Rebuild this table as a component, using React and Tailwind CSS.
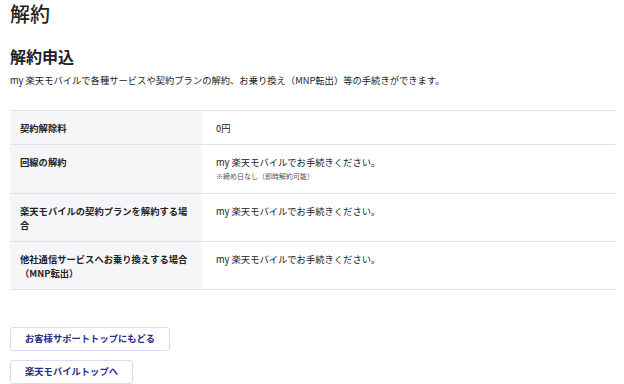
const rows = [
  { label: '契約解除料', value: '0円' },
  { label: '回線の解約', value: 'my 楽天モバイルでお手続きください。', note: '※締め日なし（即時解約可能）' },
  { label: '楽天モバイルの契約プランを解約する場合', value: 'my 楽天モバイルでお手続きください。' },
  { label: '他社通信サービスへお乗り換えする場合（MNP転出）', value: 'my 楽天モバイルでお手続きください。' },
];

export default function App() {
  return (
    <div
      className="min-h-screen bg-white pl-[10px] pr-[9px] text-[#222]"
      style={{ fontFamily: '"Noto Sans CJK JP", "Noto Sans", sans-serif' }}
    >
      <h1 className="text-[20px] leading-[28px] font-medium">解約</h1>

      <h2 className="mt-[17px] text-[16px] leading-[22px] font-bold">解約申込</h2>
      <p className="mt-[6px] text-[9.3px] leading-[14px]">
        my 楽天モバイルで各種サービスや契約プランの解約、お乗り換え（MNP転出）等の手続きができます。
      </p>

      <table className="mt-[23px] w-full border-collapse text-[9.3px] leading-[14px]">
        <tbody>
          {rows.map((row) => (
            <tr key={row.label} className="border-y border-[#e2e1ee]">
              <th className="w-[192px] bg-[#f6f6f9] px-[10px] pt-[10px] pb-[9px] text-left align-top font-bold">
                {row.label}
              </th>
              <td className="px-[14px] pt-[10px] pb-[9px] align-top">
                <div>{row.value}</div>
                {row.note && <div className="text-[7px] leading-[15px] text-[#555]">{row.note}</div>}
              </td>
            </tr>
          ))}
        </tbody>
      </table>

      <div className="mt-[37px] flex flex-col items-start gap-[9px]">
        <button className="h-[24px] rounded-[3px] border border-[#dcd9f6] bg-white px-[14px] text-[9.3px] font-bold text-[#2e2b7c]">
          お客様サポートトップにもどる
        </button>
        <button className="h-[24px] rounded-[3px] border border-[#dcd9f6] bg-white px-[14px] text-[9.3px] font-bold text-[#2e2b7c]">
          楽天モバイルトップへ
        </button>
      </div>
    </div>
  );
}
